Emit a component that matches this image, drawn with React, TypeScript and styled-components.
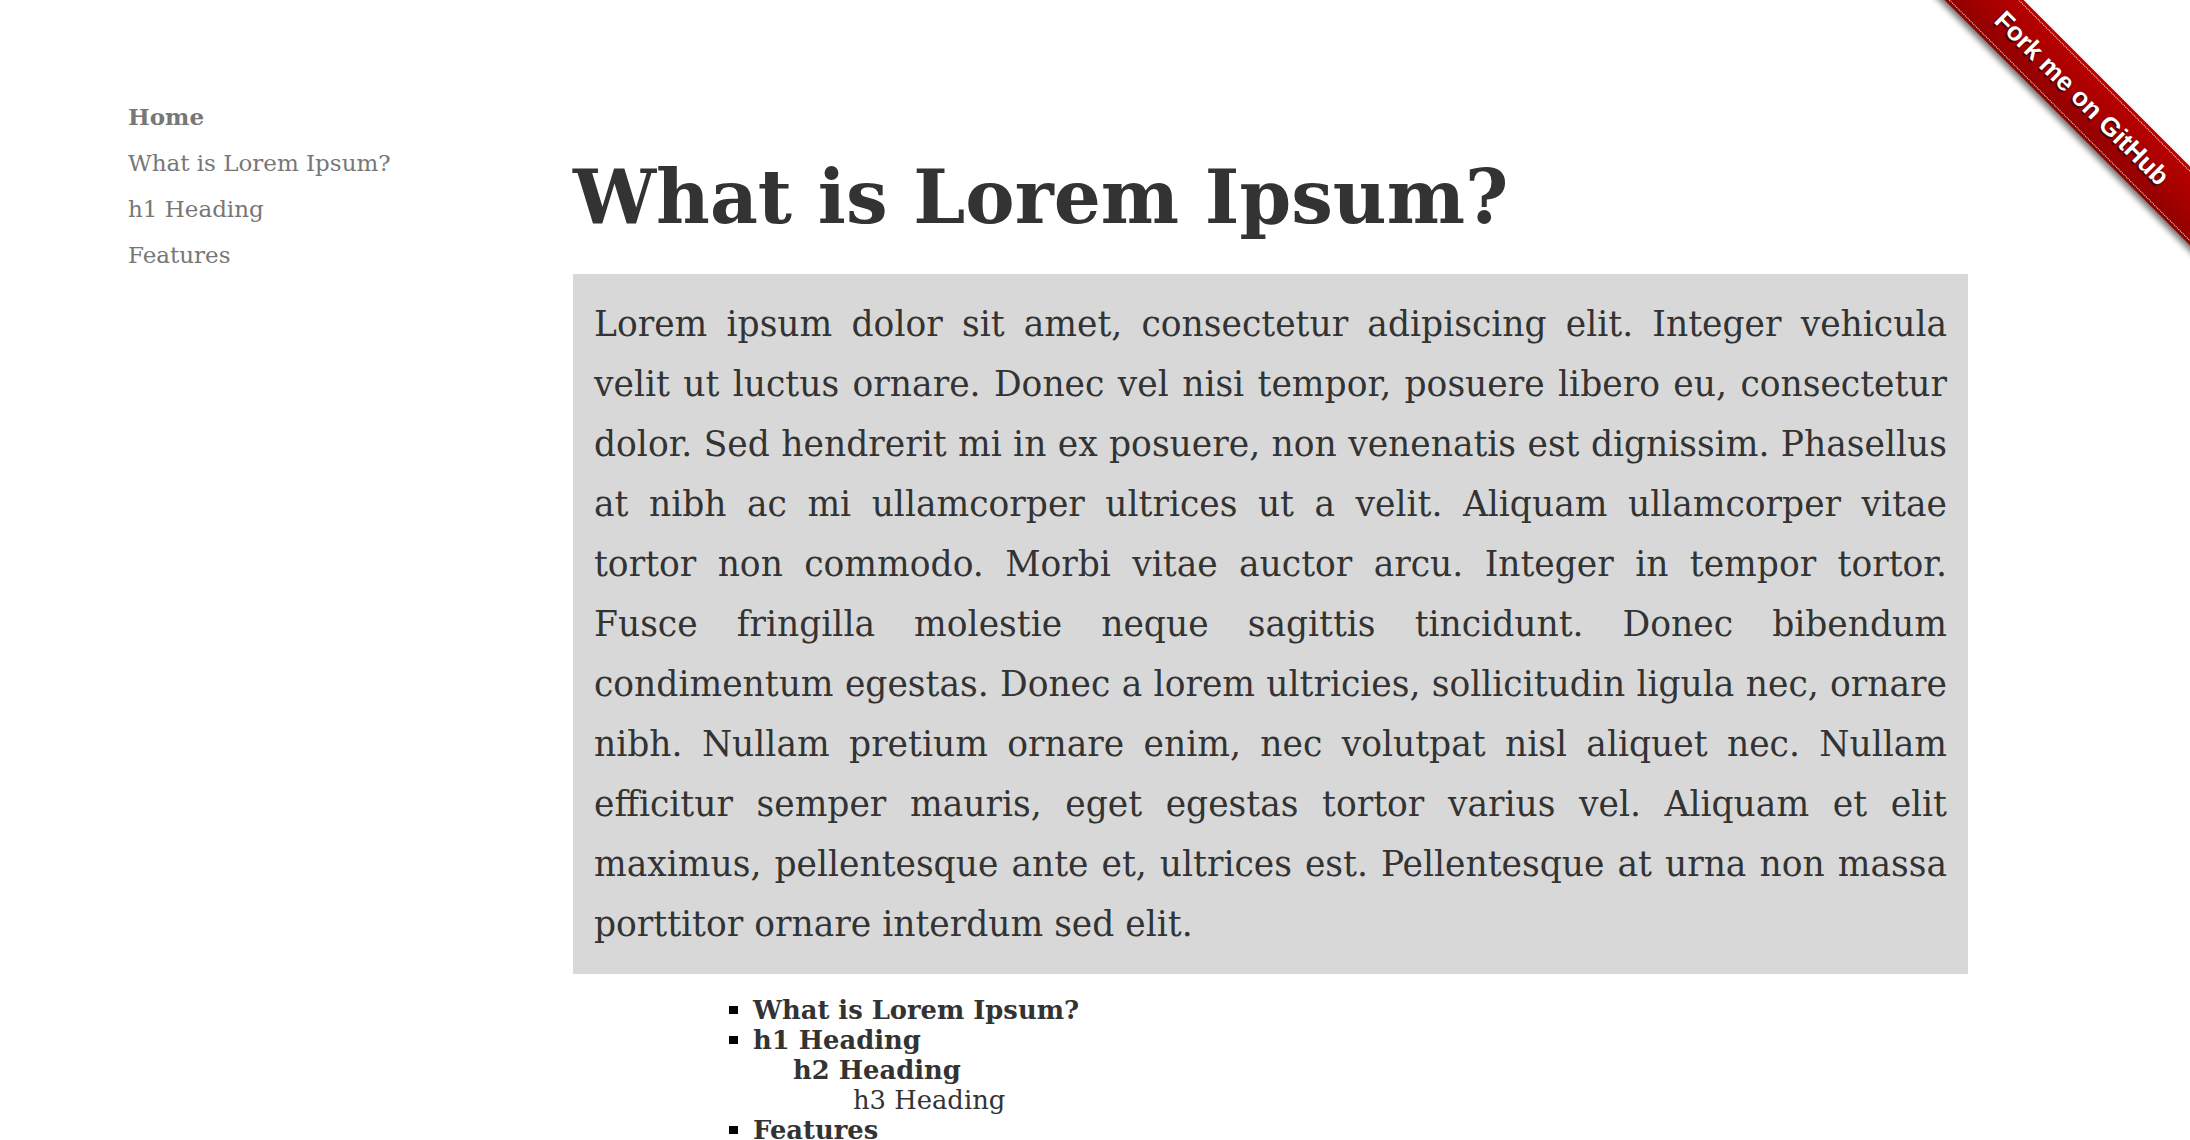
import React from "react";
import styled, { createGlobalStyle } from "styled-components";

const Global = createGlobalStyle`
  html, body {
    margin: 0;
    padding: 0;
    background: #ffffff;
    overflow: hidden;
  }
  body {
    font-family: "DejaVu Serif", "Liberation Serif", serif;
    color: #333333;
  }
`;

const Page = styled.div`
  position: relative;
  display: flex;
  align-items: flex-start;
  padding-left: 128px;
  min-height: 1140px;
  box-sizing: border-box;
`;

const Sidebar = styled.nav`
  width: 445px;
  flex: none;
  padding-top: 94px;
  display: flex;
  flex-direction: column;
`;

const NavLink = styled.a<{ $strong?: boolean }>`
  font-size: 23px;
  line-height: 46px;
  color: #777777;
  text-decoration: none;
  font-weight: ${(p) => (p.$strong ? 700 : 400)};
`;

const Main = styled.main`
  width: 1395px;
  flex: none;
  padding-top: 154px;
`;

const Title = styled.h1`
  margin: 0 0 33px;
  font-size: 74px;
  line-height: 87px;
  font-weight: 700;
  color: #333333;
`;

const Lead = styled.p`
  margin: 0;
  padding: 20px 21px;
  background: #d8d8d8;
  font-size: 34.5px;
  line-height: 60px;
  text-align: justify;
  color: #333333;
`;

const Toc = styled.ul`
  list-style: none;
  margin: 21px 0 0;
  padding: 0 0 0 180px;
  font-size: 25.8px;
  line-height: 30px;
  color: #333333;
`;

const TocItem = styled.li<{ $bullet?: boolean; $strong?: boolean }>`
  position: relative;
  font-weight: ${(p) => (p.$strong ? 700 : 400)};
  &::before {
    content: "";
    display: ${(p) => (p.$bullet ? "block" : "none")};
    position: absolute;
    left: -24px;
    top: 11px;
    width: 9px;
    height: 8px;
    background: #000000;
  }
`;

const SubToc = styled.ul<{ $indent: number }>`
  list-style: none;
  margin: 0;
  padding: 0 0 0 ${(p) => p.$indent}px;
`;

const RibbonClip = styled.div`
  position: absolute;
  top: 0;
  right: 0;
  width: 270px;
  height: 270px;
  overflow: hidden;
  pointer-events: none;
`;

const RibbonBand = styled.a`
  position: absolute;
  left: -38px;
  top: 70px;
  width: 400px;
  height: 56px;
  box-sizing: border-box;
  padding: 3px 0;
  transform: rotate(45deg);
  background: linear-gradient(to bottom, #b80000 0%, #a60000 55%, #8e0000 100%);
  box-shadow: 0 4px 6px rgba(0, 0, 0, 0.55);
  text-decoration: none;
  pointer-events: auto;
`;

const RibbonText = styled.span`
  display: flex;
  align-items: center;
  justify-content: center;
  height: 100%;
  box-sizing: border-box;
  border-top: 1px dotted rgba(255, 255, 255, 0.9);
  border-bottom: 1px dotted rgba(255, 255, 255, 0.9);
  font-family: "Liberation Sans", Arial, sans-serif;
  font-weight: 700;
  font-size: 26px;
  color: #ffffff;
  text-shadow: 0 2px 2px rgba(0, 0, 0, 0.7);
  white-space: nowrap;
`;

const paragraph =
  "Lorem ipsum dolor sit amet, consectetur adipiscing elit. Integer vehicula velit ut luctus ornare. Donec vel nisi tempor, posuere libero eu, consectetur dolor. Sed hendrerit mi in ex posuere, non venenatis est dignissim. Phasellus at nibh ac mi ullamcorper ultrices ut a velit. Aliquam ullamcorper vitae tortor non commodo. Morbi vitae auctor arcu. Integer in tempor tortor. Fusce fringilla molestie neque sagittis tincidunt. Donec bibendum condimentum egestas. Donec a lorem ultricies, sollicitudin ligula nec, ornare nibh. Nullam pretium ornare enim, nec volutpat nisl aliquet nec. Nullam efficitur semper mauris, eget egestas tortor varius vel. Aliquam et elit maximus, pellentesque ante et, ultrices est. Pellentesque at urna non massa porttitor ornare interdum sed elit.";

export default function App() {
  return (
    <>
      <Global />
      <Page>
        <Sidebar>
          <NavLink href="#" $strong>
            Home
          </NavLink>
          <NavLink href="#">What is Lorem Ipsum?</NavLink>
          <NavLink href="#">h1 Heading</NavLink>
          <NavLink href="#">Features</NavLink>
        </Sidebar>
        <Main>
          <Title>What is Lorem Ipsum?</Title>
          <Lead>{paragraph}</Lead>
          <Toc>
            <TocItem $bullet $strong>
              What is Lorem Ipsum?
            </TocItem>
            <TocItem $bullet $strong>
              h1 Heading
              <SubToc $indent={40}>
                <TocItem $strong>
                  h2 Heading
                  <SubToc $indent={60}>
                    <TocItem>h3 Heading</TocItem>
                  </SubToc>
                </TocItem>
              </SubToc>
            </TocItem>
            <TocItem $bullet $strong>
              Features
            </TocItem>
          </Toc>
        </Main>
        <RibbonClip>
          <RibbonBand href="#">
            <RibbonText>Fork me on GitHub</RibbonText>
          </RibbonBand>
        </RibbonClip>
      </Page>
    </>
  );
}
